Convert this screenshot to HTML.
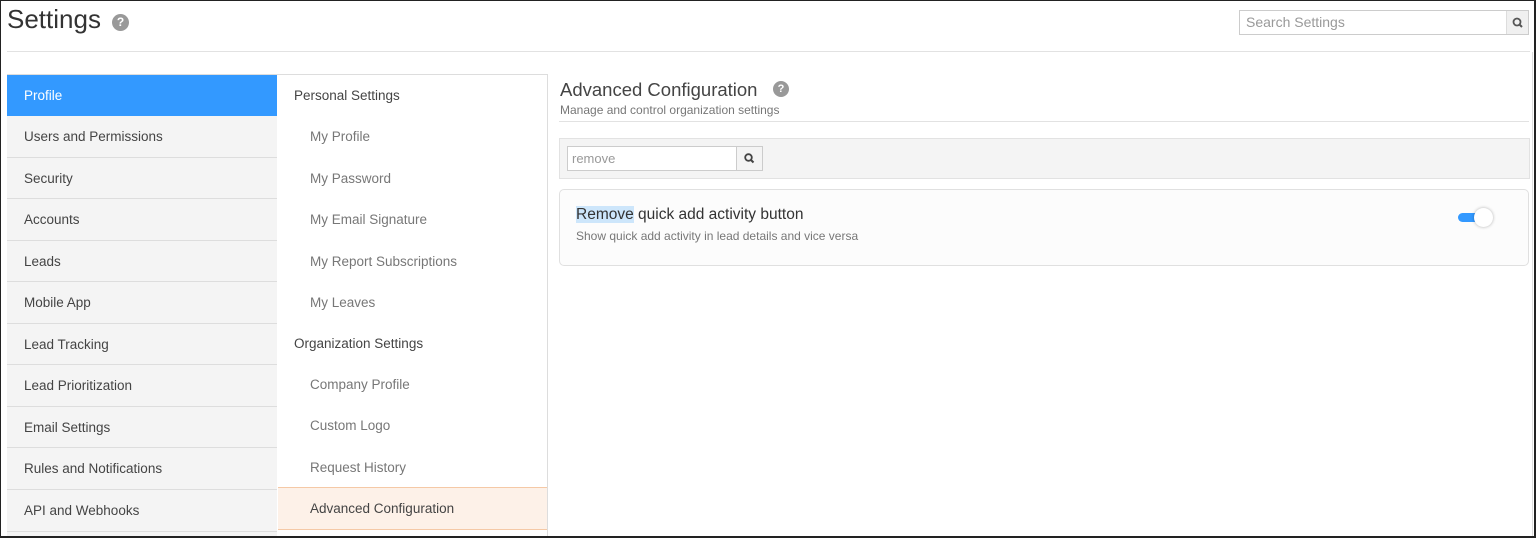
<!DOCTYPE html>
<html style="overflow:hidden;width:1536px;height:538px"><head><style>
*{box-sizing:border-box;margin:0;padding:0}
body{width:1536px;height:538px;overflow:hidden;background:#fff;font-family:"Liberation Sans",sans-serif;position:relative;color:#444}
.a{position:absolute}
.frame{left:0;top:0;width:1536px;height:538px;border:1px solid #222;border-width:1px 2px 2px 1px;z-index:10;pointer-events:none}
.q{display:inline-block;border-radius:50%;background:#999;color:#fff;font-weight:bold;text-align:center}
.lrow{left:7px;width:270px;background:#f4f4f4;border-bottom:1px solid #ddd;font-size:13.5px;line-height:41px;padding-left:17px;color:#444}
.mrow{left:278px;width:269px;font-size:13.5px;padding-left:32px;color:#777;height:41px;line-height:41px}
.mh{padding-left:16px;color:#444}
</style></head><body>
<div class="a" style="left:0;top:0;width:1536px;height:538px;overflow:hidden">
<div class="a frame"></div>
<div class="a" style="left:7px;top:4px;font-size:26px;color:#333">Settings</div>
<div class="a q" style="left:112px;top:14px;width:17px;height:17px;font-size:12px;line-height:17px">?</div>
<div class="a" style="left:1239px;top:10px;width:290px;height:25px;border:1px solid #ccc;font-size:14px;color:#999;line-height:23px;padding-left:6px">Search Settings</div>
<div class="a" style="left:1506px;top:11px;width:22px;height:23px;background:#f0f0f0;border-left:1px solid #ddd"><svg width="22" height="23"><circle cx="10" cy="11" r="3.5" fill="none" stroke="#555" stroke-width="1.8"/><line x1="12.5" y1="13.5" x2="15" y2="16" stroke="#555" stroke-width="2"/></svg></div>
<div class="a" style="left:7px;top:51px;width:1523px;height:1px;background:#e2e2e2"></div>
<div class="a" style="left:1532px;top:52px;width:1px;height:486px;background:#ddd"></div>

<div class="a" style="left:7px;top:74px;width:541px;height:470px;border:1px solid #ddd"></div>
<div class="a lrow" style="top:75px;height:41px;background:#3399ff;color:#fff;border:none">Profile</div>
<div class="a lrow" style="top:116px;height:42px">Users and Permissions</div>
<div class="a lrow" style="top:158px;height:41px">Security</div>
<div class="a lrow" style="top:199px;height:42px">Accounts</div>
<div class="a lrow" style="top:241px;height:41px">Leads</div>
<div class="a lrow" style="top:282px;height:42px">Mobile App</div>
<div class="a lrow" style="top:324px;height:41px">Lead Tracking</div>
<div class="a lrow" style="top:365px;height:42px">Lead Prioritization</div>
<div class="a lrow" style="top:407px;height:41px">Email Settings</div>
<div class="a lrow" style="top:448px;height:42px">Rules and Notifications</div>
<div class="a lrow" style="top:490px;height:42px">API and Webhooks</div>
<div class="a lrow" style="top:532px;height:10px"></div>

<div class="a mrow mh" style="top:75px">Personal Settings</div>
<div class="a mrow" style="top:116px">My Profile</div>
<div class="a mrow" style="top:158px">My Password</div>
<div class="a mrow" style="top:199px">My Email Signature</div>
<div class="a mrow" style="top:241px">My Report Subscriptions</div>
<div class="a mrow" style="top:282px">My Leaves</div>
<div class="a mrow mh" style="top:323px">Organization Settings</div>
<div class="a mrow" style="top:364px">Company Profile</div>
<div class="a mrow" style="top:405px">Custom Logo</div>
<div class="a mrow" style="top:447px">Request History</div>
<div class="a mrow" style="top:487px;height:43px;background:#fdf1e8;border-top:1px solid #f5c9a6;border-bottom:1px solid #f5c9a6;color:#444;line-height:41px">Advanced Configuration</div>

<div class="a" style="left:560px;top:79px;font-size:18.5px;color:#444">Advanced Configuration</div>
<div class="a q" style="left:773px;top:81px;width:16px;height:16px;font-size:11px;line-height:16px">?</div>
<div class="a" style="left:560px;top:103px;font-size:12px;color:#777">Manage and control organization settings</div>
<div class="a" style="left:559px;top:121px;width:970px;height:1px;background:#e2e2e2"></div>
<div class="a" style="left:559px;top:138px;width:971px;height:41px;background:#f4f4f4;border:1px solid #e2e2e2"></div>
<div class="a" style="left:567px;top:146px;width:170px;height:25px;background:#fff;border:1px solid #ccc;font-size:13px;color:#999;line-height:23px;padding-left:4px">remove</div>
<div class="a" style="left:736px;top:146px;width:27px;height:25px;background:#f4f4f4;border:1px solid #ccc"><svg width="25" height="23"><circle cx="11.5" cy="10.5" r="3.3" fill="none" stroke="#444" stroke-width="1.8"/><line x1="14" y1="13" x2="16.5" y2="15.5" stroke="#444" stroke-width="2"/></svg></div>
<div class="a" style="left:559px;top:189px;width:970px;height:77px;background:#fcfcfc;border:1px solid #e0e0e0;border-radius:5px"></div>
<div class="a" style="left:576px;top:206px;font-size:15.5px;color:#333"><span style="background:#cde6fb">Remove</span> quick add activity button</div>
<div class="a" style="left:576px;top:229px;font-size:12px;color:#777">Show quick add activity in lead details and vice versa</div>
<div class="a" style="left:1458px;top:213px;width:26px;height:9px;border-radius:5px;background:#3399ff"></div>
<div class="a" style="left:1474px;top:208px;width:19px;height:19px;border-radius:50%;background:#fff;box-shadow:0 0 3px rgba(0,0,0,.3)"></div>
</div>
</body></html>
